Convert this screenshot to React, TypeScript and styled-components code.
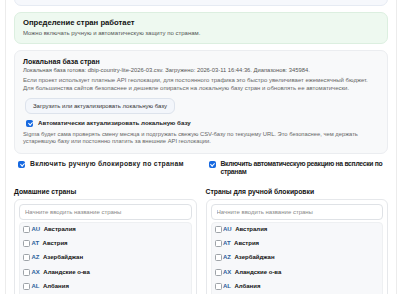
import styled, { createGlobalStyle } from "styled-components";

const GlobalStyle = createGlobalStyle`
  body {
    margin: 0;
    background: #ffffff;
    font-family: "Liberation Sans", Arial, sans-serif;
    color: #111;
    overflow: hidden;
  }
`;

const Panel = styled.div`
  margin: -30px 6px 0 5px;
  padding: 0 8px 20px 8px;
  border: 1px solid #ececec;
  background: #fff;
  display: flex;
  flex-direction: column;
  gap: 6px;
`;

const Card = styled.div<{ $tone?: "green" | "blue" | "grey" }>`
  border: 1px solid
    ${(p) => (p.$tone === "green" ? "#dcefe0" : p.$tone === "blue" ? "#e6ebf3" : "#ebedf0")};
  background: ${(p) =>
    p.$tone === "green" ? "#eef9f0" : p.$tone === "blue" ? "#f6f8fc" : "#f8f9fa"};
  border-radius: 7px;
  padding: 6px 8px 7px;
`;

const TopStub = styled(Card)`
  height: 20px;
`;

const Notice = styled(Card)`
  padding: 5px 8px 6px;
`;

const Title = styled.div<{ $size?: number }>`
  font-size: ${(p) => p.$size ?? 7.5}px;
  font-weight: 700;
  line-height: 9px;
`;

const Text = styled.div<{ $size?: number; $lh?: number; $muted?: boolean }>`
  font-size: ${(p) => p.$size ?? 6.1}px;
  line-height: ${(p) => p.$lh ?? 8}px;
  color: ${(p) => (p.$muted ? "#666" : "#555")};
`;

const Button = styled.button`
  display: block;
  margin: 6px 0 5px 2px;
  height: 16px;
  padding: 0 7px;
  border: 1px solid #dde3ec;
  border-radius: 6px;
  background: #f3f6fb;
  font-family: inherit;
  font-size: 6px;
  color: #333;
`;

const Check = styled.input.attrs({ type: "checkbox" })`
  appearance: none;
  position: relative;
  box-sizing: border-box;
  margin: 0;
  width: 7px;
  height: 7px;
  flex-shrink: 0;
  border: 1px solid #9ea3a8;
  border-radius: 1.5px;
  background: #fff;

  &:checked {
    background: #1769e0;
    border-color: #1769e0;
  }
  &:checked::after {
    content: "";
    position: absolute;
    left: 1.6px;
    top: 0.2px;
    width: 1.6px;
    height: 3.2px;
    border: solid #fff;
    border-width: 0 1px 1px 0;
    transform: rotate(45deg);
  }
`;

const CheckLine = styled.label<{ $size?: number; $tracking?: number }>`
  display: flex;
  align-items: flex-start;
  gap: 5px;
  font-size: ${(p) => p.$size ?? 6.8}px;
  letter-spacing: ${(p) => p.$tracking ?? 0}px;
  line-height: 8.5px;
  font-weight: 700;
  color: #222;
  ${Check} {
    margin-top: 1px;
  }
`;

const Grid = styled.div`
  display: grid;
  grid-template-columns: 1fr 1fr;
  column-gap: 9px;
`;

const ToggleCell = styled.div<{ $inset: number }>`
  padding: 0 3px 0 ${(p) => p.$inset}px;
`;

const ColumnHead = styled.div`
  font-size: 6.8px;
  line-height: 9px;
  font-weight: 700;
  margin: 10px 0 3px;
`;

const ListCard = styled.div`
  border: 1px solid #e6e8eb;
  border-radius: 6px;
  padding: 4px 4px 0 4px;
  background: #fff;
`;

const Search = styled.input`
  display: block;
  box-sizing: border-box;
  width: 100%;
  height: 16px;
  border: 1px solid #dfe2e6;
  border-radius: 4px;
  padding: 0 5px;
  font-family: inherit;
  font-size: 6px;
  &::placeholder {
    color: #888;
  }
`;

const List = styled.div`
  margin-top: 2px;
  background: #f7f8fa;
  border: 1px solid #eef0f2;
  border-radius: 4px;
  padding: 2px 3px 10px 3px;
  display: flex;
  flex-direction: column;
  gap: 5.4px;
`;

const Item = styled.label`
  display: flex;
  align-items: center;
  gap: 1.5px;
  font-size: 6px;
  line-height: 9px;
  font-weight: 700;
  color: #111;
`;

const Code = styled.span`
  color: #2b5d9a;
  margin-right: 2px;
`;

const countries: [string, string][] = [
  ["AU", "Австралия"],
  ["AT", "Австрия"],
  ["AZ", "Азербайджан"],
  ["AX", "Аландские о-ва"],
  ["AL", "Албания"],
];

const CountryList = () => (
  <ListCard>
    <Search placeholder="Начните вводить название страны" />
    <List>
      {countries.map(([code, name]) => (
        <Item key={code}>
          <Check />
          <Code>{code}</Code>
          {name}
        </Item>
      ))}
    </List>
  </ListCard>
);

const App = () => (
  <>
    <GlobalStyle />
    <Panel>
      <TopStub $tone="blue" />
      <Notice $tone="green">
        <Title $size={7.7}>Определение стран работает</Title>
        <Text $size={6} style={{ marginTop: 2 }}>
          Можно включать ручную и автоматическую защиту по странам.
        </Text>
      </Notice>
      <Card>
        <Title $size={7}>Локальная база стран</Title>
        <Text $size={5.8}>
          Локальная база готова: dbip-country-lite-2026-03.csv. Загружено: 2026-03-11 16:44:36.
          Диапазонов: 345984.
        </Text>
        <Text $size={6} $muted style={{ marginTop: 2 }}>
          Если проект использует платные API геолокации, для постоянного трафика это быстро
          увеличивает ежемесячный бюджет. Для большинства сайтов безопаснее и дешевле опираться на
          локальную базу стран и обновлять ее автоматически.
        </Text>
        <Button>Загрузить или актуализировать локальную базу</Button>
        <CheckLine $size={6.2} style={{ marginLeft: 3 }}>
          <Check defaultChecked />
          Автоматически актуализировать локальную базу
        </CheckLine>
        <Text $size={5.8} $lh={7.5} $muted style={{ marginTop: 3 }}>
          Sigma будет сама проверять смену месяца и подгружать свежую CSV-базу по текущему URL. Это
          безопаснее, чем держать устаревшую базу или постоянно платить за внешние API геолокации.
        </Text>
      </Card>
      <div>
        <Grid>
          <ToggleCell $inset={4}>
            <CheckLine $tracking={0.3}>
              <Check defaultChecked />
              Включить ручную блокировку по странам
            </CheckLine>
          </ToggleCell>
          <ToggleCell $inset={3}>
            <CheckLine $tracking={-0.3}>
              <Check defaultChecked />
              Включить автоматическую реакцию на всплески по странам
            </CheckLine>
          </ToggleCell>
        </Grid>
        <Grid>
          <div>
            <ColumnHead>Домашние страны</ColumnHead>
            <CountryList />
          </div>
          <div>
            <ColumnHead>Страны для ручной блокировки</ColumnHead>
            <CountryList />
          </div>
        </Grid>
      </div>
    </Panel>
  </>
);

export default App;
